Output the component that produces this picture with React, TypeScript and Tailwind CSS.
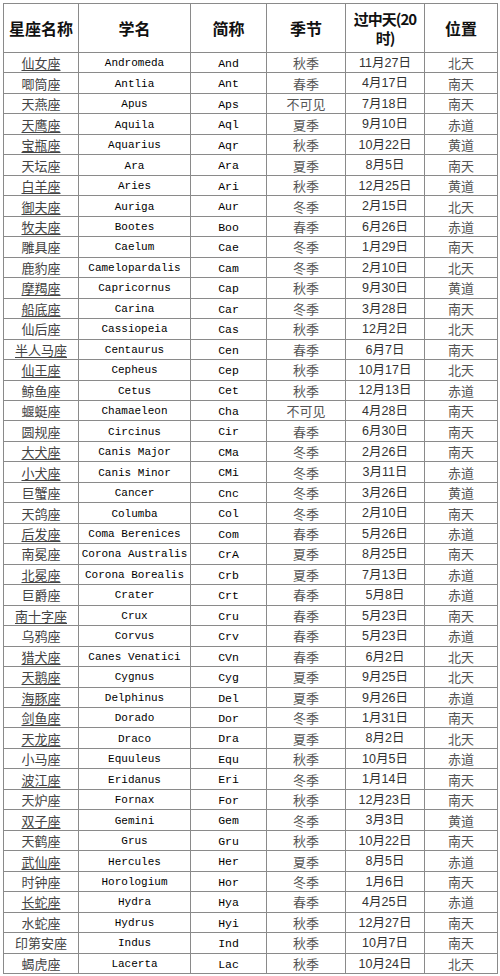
const rows: [string, string, string, string, string, string, boolean][] = [
  ['仙女座', 'Andromeda', 'And', '秋季', '11月27日', '北天', true],
  ['唧筒座', 'Antlia', 'Ant', '春季', '4月17日', '南天', false],
  ['天燕座', 'Apus', 'Aps', '不可见', '7月18日', '南天', false],
  ['天鹰座', 'Aquila', 'Aql', '夏季', '9月10日', '赤道', true],
  ['宝瓶座', 'Aquarius', 'Aqr', '秋季', '10月22日', '黄道', true],
  ['天坛座', 'Ara', 'Ara', '夏季', '8月5日', '南天', false],
  ['白羊座', 'Aries', 'Ari', '秋季', '12月25日', '黄道', true],
  ['御夫座', 'Auriga', 'Aur', '冬季', '2月15日', '北天', true],
  ['牧夫座', 'Bootes', 'Boo', '春季', '6月26日', '赤道', true],
  ['雕具座', 'Caelum', 'Cae', '冬季', '1月29日', '南天', false],
  ['鹿豹座', 'Camelopardalis', 'Cam', '冬季', '2月10日', '北天', false],
  ['摩羯座', 'Capricornus', 'Cap', '秋季', '9月30日', '黄道', true],
  ['船底座', 'Carina', 'Car', '冬季', '3月28日', '南天', true],
  ['仙后座', 'Cassiopeia', 'Cas', '秋季', '12月2日', '北天', false],
  ['半人马座', 'Centaurus', 'Cen', '春季', '6月7日', '南天', true],
  ['仙王座', 'Cepheus', 'Cep', '秋季', '10月17日', '北天', true],
  ['鲸鱼座', 'Cetus', 'Cet', '秋季', '12月13日', '赤道', false],
  ['蝘蜓座', 'Chamaeleon', 'Cha', '不可见', '4月28日', '南天', false],
  ['圆规座', 'Circinus', 'Cir', '春季', '6月30日', '南天', false],
  ['大犬座', 'Canis Major', 'CMa', '冬季', '2月26日', '南天', true],
  ['小犬座', 'Canis Minor', 'CMi', '冬季', '3月11日', '赤道', true],
  ['巨蟹座', 'Cancer', 'Cnc', '冬季', '3月26日', '黄道', false],
  ['天鸽座', 'Columba', 'Col', '冬季', '2月10日', '南天', false],
  ['后发座', 'Coma Berenices', 'Com', '春季', '5月26日', '赤道', true],
  ['南冕座', 'Corona Australis', 'CrA', '夏季', '8月25日', '南天', false],
  ['北冕座', 'Corona Borealis', 'Crb', '夏季', '7月13日', '赤道', true],
  ['巨爵座', 'Crater', 'Crt', '春季', '5月8日', '赤道', false],
  ['南十字座', 'Crux', 'Cru', '春季', '5月23日', '南天', true],
  ['乌鸦座', 'Corvus', 'Crv', '春季', '5月23日', '赤道', false],
  ['猎犬座', 'Canes Venatici', 'CVn', '春季', '6月2日', '北天', true],
  ['天鹅座', 'Cygnus', 'Cyg', '夏季', '9月25日', '北天', true],
  ['海豚座', 'Delphinus', 'Del', '夏季', '9月26日', '赤道', true],
  ['剑鱼座', 'Dorado', 'Dor', '冬季', '1月31日', '南天', true],
  ['天龙座', 'Draco', 'Dra', '夏季', '8月2日', '北天', true],
  ['小马座', 'Equuleus', 'Equ', '秋季', '10月5日', '赤道', false],
  ['波江座', 'Eridanus', 'Eri', '冬季', '1月14日', '南天', true],
  ['天炉座', 'Fornax', 'For', '秋季', '12月23日', '南天', false],
  ['双子座', 'Gemini', 'Gem', '冬季', '3月3日', '黄道', true],
  ['天鹤座', 'Grus', 'Gru', '秋季', '10月22日', '南天', false],
  ['武仙座', 'Hercules', 'Her', '夏季', '8月5日', '赤道', true],
  ['时钟座', 'Horologium', 'Hor', '冬季', '1月6日', '南天', false],
  ['长蛇座', 'Hydra', 'Hya', '春季', '4月25日', '赤道', true],
  ['水蛇座', 'Hydrus', 'Hyi', '秋季', '12月27日', '南天', false],
  ['印第安座', 'Indus', 'Ind', '秋季', '10月7日', '南天', false],
  ['蝎虎座', 'Lacerta', 'Lac', '秋季', '10月24日', '北天', false],
];

const cjk = "font-['Noto_Sans_CJK_SC',sans-serif]";
const mono = "font-['Liberation_Mono','Noto_Sans_CJK_SC',monospace]";
const sans = "font-['Liberation_Sans','Noto_Sans_CJK_SC',sans-serif]";
const cell = 'border border-[#8a8a8a] p-0 text-center align-middle leading-none whitespace-nowrap overflow-hidden';

export default function App() {
  return (
    <div className="w-[500px] h-[976px] bg-white pt-[3px] pl-[3px]">
      <table className="table-fixed border-collapse w-[494px] text-[#3a3a3a]">
        <colgroup>
          <col className="w-[75px]" />
          <col className="w-[112px]" />
          <col className="w-[76px]" />
          <col className="w-[79px]" />
          <col className="w-[79px]" />
          <col className="w-[73px]" />
        </colgroup>
        <thead>
          <tr className={`h-[49px] text-[16px] font-bold text-[#111] ${cjk}`}>
            <th className={cell}>星座名称</th>
            <th className={cell}>学名</th>
            <th className={cell}>简称</th>
            <th className={cell}>季节</th>
            <th className={`${cell} text-[15px] tracking-[-1px]`}>
              <div className="flex flex-col items-center gap-[4px] leading-none">
                <span>过中天(20</span>
                <span>时)</span>
              </div>
            </th>
            <th className={cell}>位置</th>
          </tr>
        </thead>
        <tbody>
          {rows.map(([name, latin, abbr, season, date, pos, underline]) => (
            <tr key={latin} className="h-[20.47px]">
              <td className={`${cell} ${cjk} text-[13px] text-[#444]`}>
                <span className={underline ? 'underline underline-offset-2' : ''}>{name}</span>
              </td>
              <td className={`${cell} ${mono} pt-[2px] text-[11px] text-[#000]`}>{latin}</td>
              <td className={`${cell} ${mono} pt-[2px] text-[11.5px] text-[#000]`}>{abbr}</td>
              <td className={`${cell} ${cjk} text-[13px] text-[#555]`}>{season}</td>
              <td className={`${cell} ${sans} pt-[1px] text-[12.5px] text-[#333]`}>{date}</td>
              <td className={`${cell} ${cjk} text-[13px] text-[#555]`}>{pos}</td>
            </tr>
          ))}
        </tbody>
      </table>
    </div>
  );
}
